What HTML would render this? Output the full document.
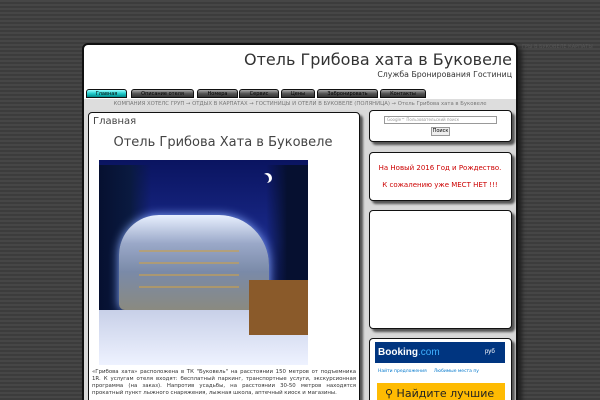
<!DOCTYPE html>
<html style="width:600px;height:400px;overflow:hidden"><head><meta charset="utf-8"><style>
*{margin:0;padding:0;box-sizing:border-box}
body{width:600px;height:400px;overflow:hidden;background:repeating-linear-gradient(180deg,#464646 0,#464646 2px,#3c3c3c 2px,#3c3c3c 4px);font-family:"DejaVu Sans","Liberation Sans",sans-serif;position:relative}
.wrap{position:absolute;left:82px;top:43px;width:436px;height:362px;background:#fff;border:2px solid #111;border-radius:6px;overflow:hidden;box-shadow:4px 4px 4px #222}
.abs{position:absolute}
.title{right:4px;top:5px;font-size:16px;color:#333;white-space:nowrap}
.sub{right:4px;top:25px;font-size:7.8px;color:#333;white-space:nowrap}
.tab{position:absolute;top:44px;height:9px;border:1px solid #111;border-radius:3px 3px 0 0;background:linear-gradient(#aaa,#555 50%,#333);font-size:5px;color:#000;text-align:center;line-height:8px}
.crumb{left:0;top:54px;width:432px;height:11px;background:#ddd;font-size:5.3px;color:#777;text-align:center;line-height:11px;white-space:nowrap}
.content{left:0;top:65px;width:432px;height:310px;background:#d8d8d8}
.box{position:absolute;background:#fff;border:1.5px solid #111;border-radius:4px;box-shadow:3px 3px 2px #555}
</style></head><body>
<div class="abs" style="left:522px;top:44px;font-size:5px;color:#555;white-space:nowrap">ГРЫ В БУКОВЕЛЕ КАРПАТЫ</div>
<div class="wrap">
<div class="abs title">Отель Грибова хата в Буковеле</div>
<div class="abs sub">Служба Бронирования Гостиниц</div>
<div class="tab" style="left:2px;width:41px;background:linear-gradient(#9ff,#2cc 50%,#088)">Главная</div>
<div class="tab" style="left:47px;width:63px">Описание отеля</div>
<div class="tab" style="left:113px;width:41px">Номера</div>
<div class="tab" style="left:155px;width:40px">Сервис</div>
<div class="tab" style="left:197px;width:34px">Цены</div>
<div class="tab" style="left:233px;width:61px">Забронировать</div>
<div class="tab" style="left:296px;width:46px">Контакты</div>
<div class="abs crumb">КОМПАНИЯ ХОТЕЛС ГРУП → ОТДЫХ В КАРПАТАХ → ГОСТИНИЦЫ И ОТЕЛИ В БУКОВЕЛЕ (ПОЛЯНИЦА) → Отель Грибова хата в Буковеле</div>
<div class="abs content">
<div class="box" style="left:4px;top:2px;width:272px;height:300px">
<div class="abs" style="left:4px;top:3px;font-size:10px;color:#444">Главная</div>
<div class="abs" style="left:0;width:268px;top:22px;text-align:center;font-size:13px;color:#444">Отель Грибова Хата в Буковеле</div>
<div class="abs" style="left:10px;top:47px;width:209px;height:205px;background:linear-gradient(#0a1460,#1a2a8a 40%,#0a1040 100%);overflow:hidden">
<div class="abs" style="left:0;top:5px;width:209px;height:200px;background:linear-gradient(90deg,#061030 0,#0a1a40 15%,transparent 25%,transparent 80%,#061030 90%)"></div>
<div class="abs" style="left:20px;top:55px;width:150px;height:95px;border-radius:40px 50px 6px 6px;background:linear-gradient(#e8f0ff,#9aa8c8 30%,#7a8aa8 60%,#8a8a80);box-shadow:0 0 10px #8af"></div>
<div class="abs" style="left:40px;top:80px;width:100px;height:50px;background:repeating-linear-gradient(180deg,transparent 0,transparent 10px,#c8a050 10px,#c8a050 12px);opacity:.6"></div>
<div class="abs" style="left:0;top:150px;width:209px;height:55px;background:linear-gradient(#c8d0e8,#eef2ff)"></div>
<div class="abs" style="left:150px;top:120px;width:59px;height:55px;background:#8a5a2a"></div>
<div class="abs" style="left:160px;top:14px;width:10px;height:10px;border-radius:50%;box-shadow:3px -1px 0 #fff"></div>
</div>
<div class="abs" style="left:3px;top:256px;width:264px;font-size:5.4px;line-height:7px;color:#333;text-align:justify">«Грибова хата» расположена в ТК "Буковель" на расстоянии 150 метров от подъемника 1R. К услугам отеля входят: бесплатный паркинг, транспортные услуги, экскурсионная программа (на заказ). Напротив усадьбы, на расстоянии 30-50 метров находятся прокатный пункт лыжного снаряжения, лыжная школа, аптечный киоск и магазины.</div>
</div>
<div class="box" style="left:285px;top:0;width:143px;height:32px">
<div class="abs" style="left:14px;top:5px;width:113px;height:8px;border:1px solid #999;font-size:4px;color:#999;line-height:6px;padding-left:2px">Google™ Пользовательский поиск</div>
<div class="abs" style="left:61px;top:16px;width:19px;height:9px;border:1px solid #999;background:#eee;font-size:5px;line-height:7px;text-align:center">Поиск</div>
</div>
<div class="box" style="left:285px;top:42px;width:143px;height:49px">
<div class="abs" style="left:0;width:140px;top:11px;text-align:center;font-size:7px;color:#c00">На Новый 2016 Год и Рождество.</div>
<div class="abs" style="left:0;width:140px;top:28px;text-align:center;font-size:7px;color:#c00">К сожалению уже МЕСТ НЕТ !!!</div>
</div>
<div class="box" style="left:285px;top:100px;width:143px;height:119px"></div>
<div class="box" style="left:285px;top:228px;width:143px;height:80px">
<div class="abs" style="left:5px;top:3px;width:130px;height:21px;background:#003580;color:#fff;font:bold 10px 'Liberation Sans',sans-serif;line-height:21px;padding-left:3px">Booking<span style="color:#3fb0ff;font-weight:normal">.com</span><span style="position:absolute;left:110px;font-size:6px;font-weight:normal">руб</span></div>
<div class="abs" style="left:8px;top:30px;font-size:4.5px;color:#07c;white-space:nowrap">Найти предложения &nbsp;&nbsp;&nbsp; Любимые места пу</div>
<div class="abs" style="left:7px;top:44px;width:128px;height:30px;background:#febb02;font-size:11px;color:#222;padding:4px 0 0 8px;white-space:nowrap">⚲ Найдите лучшие</div>
</div>
</div>
</div>
</body></html>
